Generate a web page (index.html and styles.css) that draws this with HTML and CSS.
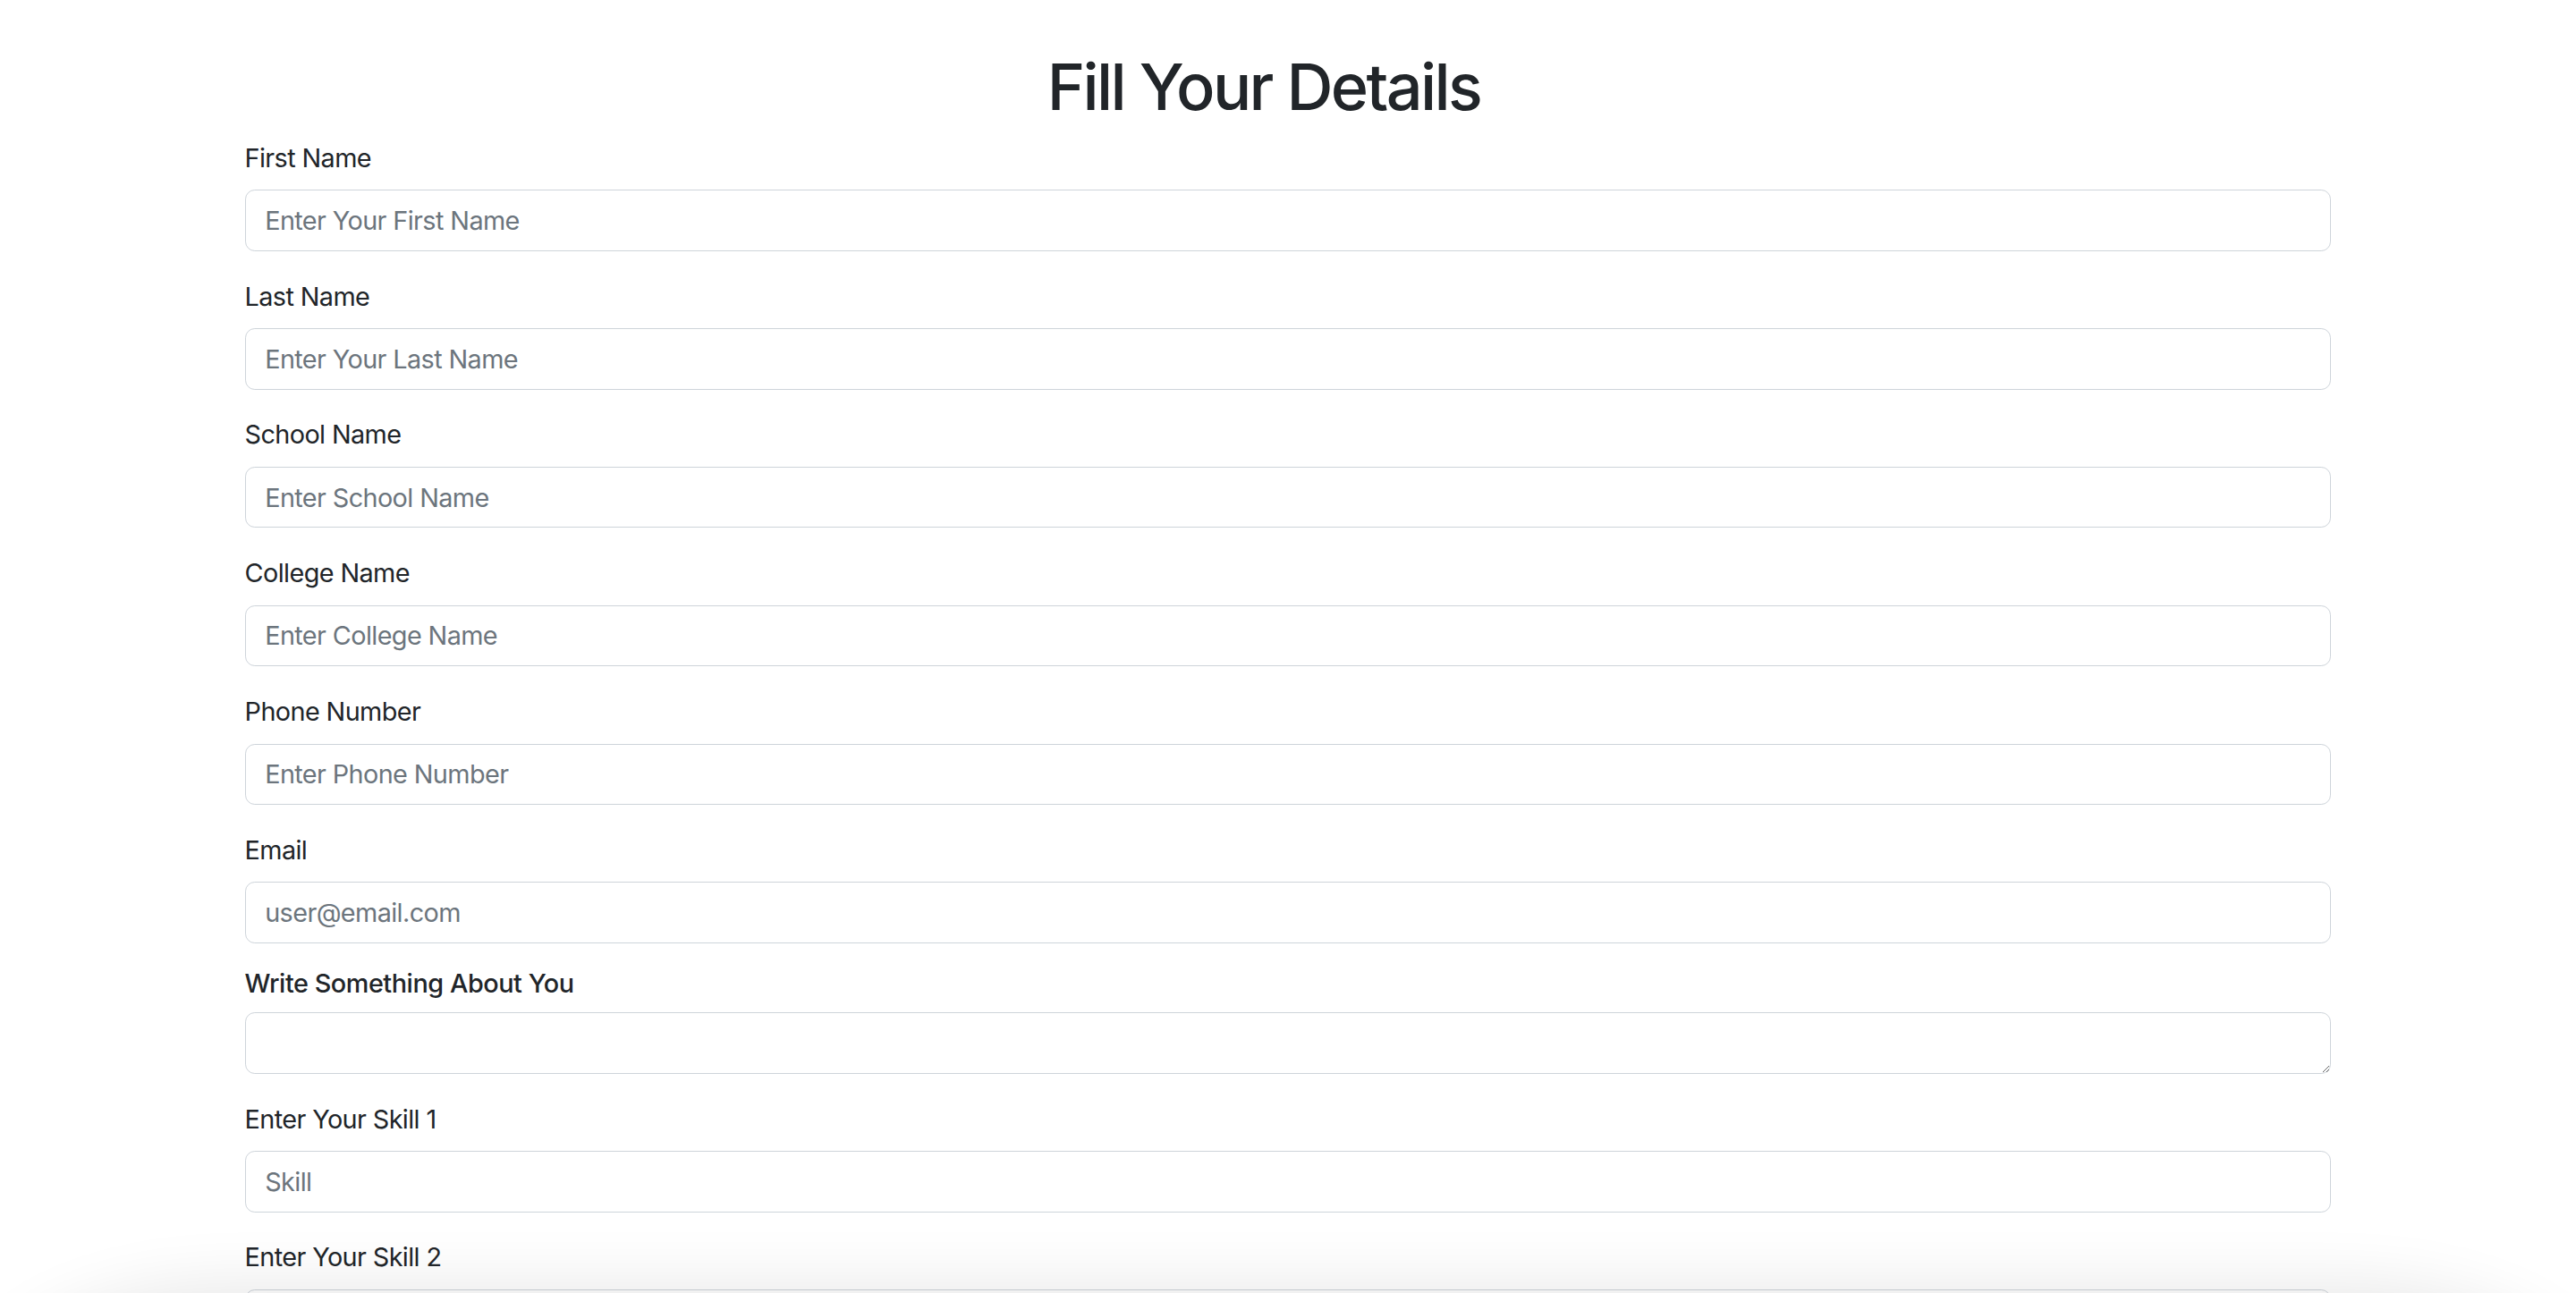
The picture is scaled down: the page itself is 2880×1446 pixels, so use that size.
FILE: index.html
```html
<!DOCTYPE html>
<html lang="en">
<head>
<meta charset="utf-8">
<title>Fill Your Details</title>
<link rel="stylesheet" href="styles.css">
</head>
<body>
<div class="container">
  <h1 class="title">Fill Your Details</h1>
  <form class="details-form">
    <div class="field">
      <label class="form-label" for="fname">First Name</label>
      <input class="form-control" id="fname" type="text" placeholder="Enter Your First Name">
    </div>
    <div class="field">
      <label class="form-label" for="lname">Last Name</label>
      <input class="form-control" id="lname" type="text" placeholder="Enter Your Last Name">
    </div>
    <div class="field">
      <label class="form-label" for="school">School Name</label>
      <input class="form-control" id="school" type="text" placeholder="Enter School Name">
    </div>
    <div class="field">
      <label class="form-label" for="college">College Name</label>
      <input class="form-control" id="college" type="text" placeholder="Enter College Name">
    </div>
    <div class="field">
      <label class="form-label" for="phone">Phone Number</label>
      <input class="form-control" id="phone" type="text" placeholder="Enter Phone Number">
    </div>
    <div class="field">
      <label class="form-label" for="email">Email</label>
      <input class="form-control" id="email" type="email" placeholder="user@email.com">
    </div>
    <div class="field">
      <h6 class="sub-heading">Write Something About You</h6>
      <textarea class="form-control textarea" rows="1"></textarea>
    </div>
    <div class="field">
      <label class="form-label" for="skill1">Enter Your Skill 1</label>
      <input class="form-control" id="skill1" type="text" placeholder="Skill">
    </div>
    <div class="field">
      <label class="form-label" for="skill2">Enter Your Skill 2</label>
      <input class="form-control" id="skill2" type="text" placeholder="Skill">
    </div>
    <div class="field">
      <label class="form-label" for="skill3">Enter Your Skill 3</label>
      <input class="form-control" id="skill3" type="text" placeholder="Skill">
    </div>
    <button class="btn" type="submit">Submit</button>
  </form>
</div>
<div class="bottom-shade"></div>
</body>
</html>
```
FILE: styles.css
```css
html, body {
  margin: 0;
  padding: 0;
  background: #ffffff;
}

body {
  font-family: Inter, "Noto Sans", "Liberation Sans", sans-serif;
  color: #212529;
  font-size: 28.8px;
  line-height: 1.5;
  letter-spacing: -0.6px;
}

.container {
  width: 2376px;
  margin: 0 auto;
  padding: 54px 21.6px 60px;
  box-sizing: border-box;
}

.title {
  margin: 0 0 14.4px;
  padding-right: 54px;
  font-size: 72px;
  font-weight: 500;
  line-height: 1.2;
  letter-spacing: -2.6px;
  text-align: center;
  color: #212529;
}

.details-form {
  display: flex;
  flex-direction: column;
}

.field {
  display: flex;
  flex-direction: column;
  margin-bottom: 28.8px;
}

.form-label {
  display: block;
  margin-bottom: 14.4px;
  font-size: 28.8px;
  line-height: 43.2px;
}

.sub-heading {
  margin: 0 0 14.4px;
  font-size: 28.8px;
  font-weight: 500;
  line-height: 1.2;
  letter-spacing: -0.45px;
  color: #212529;
}

.form-control {
  display: block;
  width: 100%;
  box-sizing: border-box;
  height: 68.4px;
  padding: 10.8px 21.6px;
  font-family: inherit;
  font-size: 28.8px;
  line-height: 43.2px;
  letter-spacing: -0.6px;
  color: #212529;
  background: #ffffff;
  border: 1.8px solid #ced4da;
  border-radius: 10.8px;
  outline: none;
}

.form-control::placeholder {
  color: #6c757d;
  opacity: 1;
}

.textarea {
  resize: vertical;
  min-height: 68.4px;
}

.btn {
  align-self: flex-start;
  padding: 10.8px 21.6px;
  font-family: inherit;
  font-size: 28.8px;
  line-height: 43.2px;
  color: #ffffff;
  background: #0d6efd;
  border: 1.8px solid #0d6efd;
  border-radius: 10.8px;
}

.bottom-shade {
  position: fixed;
  left: 0;
  right: 0;
  top: 100%;
  height: 300px;
  border-radius: 260px / 120px;
  box-shadow: 0 0 70px 10px rgba(0, 0, 0, 0.09);
  pointer-events: none;
}
```
